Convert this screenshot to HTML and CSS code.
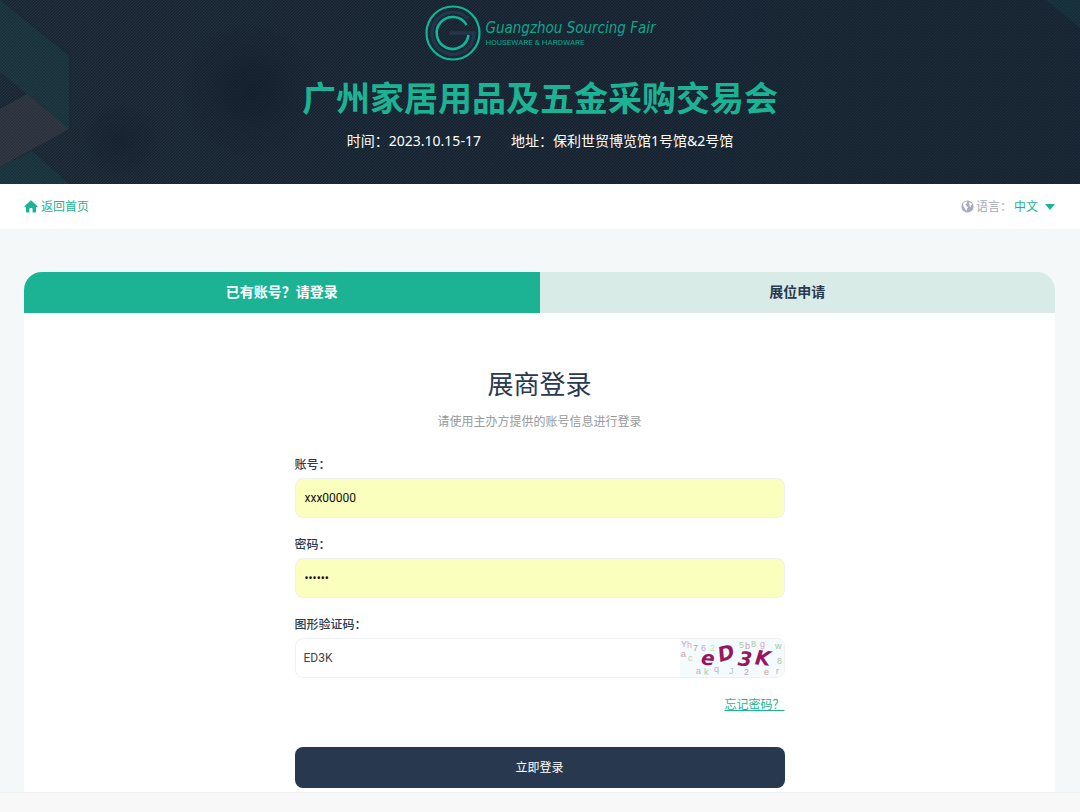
FILE: index.html
```
<!DOCTYPE html>
<html lang="zh-CN">
<head>
    <meta charset="UTF-8">
    <meta name="viewport" content="width=device-width, initial-scale=1.0">
    <title>展商登录</title>
    <link rel="stylesheet" href="styles.css">
</head>
<body>
    <header class="banner">
        <!-- Decorative facets behind the title -->
        <svg class="banner-shapes left" width="70" height="184" viewBox="0 0 70 184" aria-hidden="true">
            <path d="M0 0L69 56V129L27 94L0 72Z" fill="#1cb394" fill-opacity=".08"/>
            <path d="M0 109L27 94L69 129L0 167Z" fill="#b08c7c" fill-opacity=".12"/>
            <path d="M0 167L32 151L69 184H0Z" fill="#1cb394" fill-opacity=".08"/>
        </svg>
        <svg class="banner-shapes right" width="34" height="28" viewBox="0 0 34 28" aria-hidden="true">
            <path d="M0 0H34V28Z" fill="#1cb394" fill-opacity=".08"/>
        </svg>
        <div class="logo">
            <svg width="56" height="56" viewBox="0 0 56 56" fill="none" aria-hidden="true">
                <circle cx="28" cy="28" r="26.5" stroke="#0eb796" stroke-width="2.2"/>
                <path d="M43 13.500A21 21 0 1 0 49 28H24" stroke="#24364c" stroke-width="3.4"/>
                <path d="M41.500 20A16 16 0 1 0 43.500 30" stroke="#0eb796" stroke-width="2.6"/>
            </svg>
            <div class="logo-text">
                <span class="logo-name">Guangzhou Sourcing Fair</span>
                <span class="logo-sub">HOUSEWARE &amp; HARDWARE</span>
            </div>
        </div>
        <h1>广州家居用品及五金采购交易会</h1>
        <p class="info">
            <span>时间：2023.10.15-17</span>
            <span>地址：保利世贸博览馆1号馆&amp;2号馆</span>
        </p>
    </header>

    <nav class="toolbar">
        <a class="home" href="#">
            <svg width="14" height="13" viewBox="0 0 14 13" aria-hidden="true">
                <path d="M7 0.3L13.6 6.3Q13.7 7 13 7H12V11.6Q12 12.6 11 12.6H8.6V9Q8.6 8 7 8T5.400 9V12.6H3Q2 12.6 2 11.6V7H1Q.3 7 .4 6.300Z" fill="#1cb394"/>
            </svg>
            返回首页
        </a>
        <div class="language">
            <svg width="13" height="13" viewBox="0 0 13 13" aria-hidden="true">
                <circle cx="6.5" cy="6.500" r="6.100" fill="#a4adb9"/>
                <path d="M2 3.500L4 1.700L6.500 1.600L5.800 3.400L4.600 4.600L5.600 6L7 7.200L5.800 9.300L5.200 11.300L4 8.700L2.500 6.600ZM8 2.200L10.300 3L11.300 5L9.800 4.900L10 7L8.500 6.200L8.300 4.300Z" fill="#fff"/>
            </svg>
            <span>语言：</span>
            <button type="button" class="lang-btn">中文
                <svg width="10" height="6" viewBox="0 0 10 6" aria-hidden="true"><path d="M0 0H10L5 6Z" fill="#1cb394"/></svg>
            </button>
        </div>
    </nav>

    <main class="content">
        <div class="tabs">
            <a class="tab active" href="#">已有账号？请登录</a>
            <a class="tab" href="#">展位申请</a>
        </div>
        <div class="card">
            <h2>展商登录</h2>
            <p class="hint">请使用主办方提供的账号信息进行登录</p>
            <form class="login-form">
                <div class="field">
                    <label for="account">账号：</label>
                    <input class="filled" type="text" id="account" value="xxx00000">
                </div>
                <div class="field">
                    <label for="password">密码：</label>
                    <input class="filled" type="password" id="password" value="123456">
                </div>
                <div class="field">
                    <label for="captcha">图形验证码：</label>
                    <div class="captcha-row">
                        <input type="text" id="captcha" value="ED3K">
                        <svg class="captcha-img" width="104" height="38" viewBox="0 0 104 38" role="img" aria-label="验证码">
                            <g class="noise">
                                <text x="1" y="8" fill="#b7a3d8">Y</text>
                                <text x="7" y="9" fill="#e0a8a8">h</text>
                                <text x="13" y="12" fill="#a8a8c0">7</text>
                                <text x="1" y="18" fill="#dc9a9a">a</text>
                                <text x="8" y="22" fill="#b9d0a4">c</text>
                                <text x="21" y="12" fill="#c0a6e4">6</text>
                                <text x="30" y="12" fill="#c6dcb0">2</text>
                                <text x="34" y="33" fill="#b9abc8">q</text>
                                <text x="24" y="36" fill="#a9c99c">k</text>
                                <text x="16" y="35" fill="#dca4b8">a</text>
                                <text x="49" y="35" fill="#bcc2cc">J</text>
                                <text x="59" y="9" fill="#b4ce9c">5</text>
                                <text x="65" y="10" fill="#c89cb8">b</text>
                                <text x="71" y="8" fill="#a8c8a0">8</text>
                                <text x="80" y="8" fill="#dba6c2">g</text>
                                <text x="84" y="36" fill="#dc9a9a">e</text>
                                <text x="64" y="36" fill="#b9a0e2">2</text>
                                <text x="95" y="10" fill="#a0c8a0">w</text>
                                <text x="97" y="25" fill="#b0cc98">8</text>
                                <text x="96" y="35" fill="#dfa0a0">r</text>
                            </g>
                            <g class="code">
                                <text x="21" y="26" transform="rotate(6 28 22)">e</text>
                                <text x="38" y="21" transform="rotate(-16 46 15)">D</text>
                                <text x="58" y="27" transform="rotate(6 65 22)">3</text>
                                <text x="75" y="26" transform="rotate(6 82 20)">K</text>
                            </g>
                        </svg>
                    </div>
                </div>
                <a class="forgot" href="#">忘记密码？</a>
                <button type="submit" class="submit">立即登录</button>
            </form>
        </div>
    </main>
    <footer class="footer"></footer>
</body>
</html>
```
FILE: styles.css
```
/* General Styles */
* {
    box-sizing: border-box;
}

body {
    margin: 0;
    min-height: 100vh;
    display: flex;
    flex-direction: column;
    font-family: "Noto Sans", "Noto Sans CJK SC", sans-serif;
    font-size: 12px;
    line-height: 20px;
    color: #283a50;
    background: #f4f8f9;
}

h1, h2, p {
    margin: 0;
}

/* Banner */
.banner {
    position: relative;
    display: flex;
    flex-direction: column;
    align-items: center;
    height: 184px;
    padding-top: 5px;
    background:
        linear-gradient(135deg, rgba(5, 12, 22, 0.35) 25%, transparent 25% 50%, rgba(5, 12, 22, 0.35) 50% 75%, transparent 75%) 0 0 / 3px 3px,
        radial-gradient(circle at 250px 90px, rgba(12, 24, 38, 0.4), transparent 70px),
        radial-gradient(circle at 120px 140px, rgba(12, 24, 38, 0.3), transparent 40px),
        linear-gradient(100deg, #243342, #202e3e 60%, #1e2e3d);
}

.banner-shapes {
    position: absolute;
    top: 0;
}

.banner-shapes.left {
    left: 0;
}

.banner-shapes.right {
    right: 0;
}

.logo {
    display: flex;
    align-items: center;
    gap: 5px;
}

.logo-text {
    display: flex;
    flex-direction: column;
    color: #0da78b;
}

.logo-name {
    font-family: "DejaVu Sans Condensed", "DejaVu Sans", sans-serif;
    font-size: 15px;
    font-style: italic;
    line-height: 20px;
}

.logo-sub {
    font-family: Roboto, sans-serif;
    font-size: 8px;
    line-height: 10px;
}

h1 {
    margin-top: 12px;
    font-size: 34px;
    line-height: 50px;
    font-weight: 700;
    color: #1cb394;
}

.info {
    display: flex;
    gap: 30px;
    margin-top: 8px;
    font-size: 14px;
    color: #fff;
}

/* Toolbar */
.toolbar {
    display: flex;
    justify-content: space-between;
    align-items: center;
    height: 46px;
    padding: 0 25px 0 24px;
    background: #fff;
    border-bottom: 1px solid #f2f5f6;
}

.home {
    display: flex;
    align-items: center;
    gap: 3px;
    color: #1cb394;
    text-decoration: none;
}

.language {
    display: flex;
    align-items: center;
    gap: 2px;
    color: #a4adb9;
}

.lang-btn {
    display: flex;
    align-items: center;
    gap: 7px;
    padding: 0;
    border: 0;
    background: none;
    font: inherit;
    color: #1cb394;
}

/* Tabs and card */
.content {
    flex: 1;
    display: flex;
    flex-direction: column;
    padding: 42px 25px 0 24px;
}

.tabs {
    display: flex;
    overflow: hidden;
    border-radius: 18px 18px 0 0;
}

.tab {
    flex: 1;
    padding: 10px 0 11px;
    background: #d8ebe7;
    color: #283a50;
    font-size: 14px;
    font-weight: 700;
    text-align: center;
    text-decoration: none;
}

.tab.active {
    background: #1cb394;
    color: #fff;
}

.card {
    flex: 1;
    padding-top: 51px;
    background: #fff;
    text-align: center;
}

h2 {
    font-size: 26px;
    line-height: 40px;
    font-weight: 400;
}

.hint {
    margin-top: 8px;
    color: #999;
}

/* Login form */
.login-form {
    display: flex;
    flex-direction: column;
    max-width: 490px;
    margin: 23px auto 4px;
    text-align: left;
}

.field {
    margin-bottom: 17px;
}

.field label {
    display: block;
    margin-bottom: 3px;
    font-weight: 500;
}

.field input {
    display: block;
    width: 100%;
    height: 40px;
    padding: 0 9px;
    border: 1px solid #eef0f2;
    border-radius: 8px;
    background: #fff;
    font-family: Roboto, sans-serif;
    font-size: 12px;
    color: #444;
    outline: none;
}

.field input.filled {
    background: #faffbd;
    color: #111;
}

.captcha-row {
    display: flex;
    height: 40px;
    overflow: hidden;
    border: 1px solid #eef0f2;
    border-radius: 8px;
}

.captcha-row input {
    flex: 1;
    height: 38px;
    padding: 0 8px;
    border: 0;
}

.captcha-img {
    flex: none;
    background: #f3fbfe;
}

.noise {
    font-family: "Liberation Sans", sans-serif;
    font-size: 9px;
}

.code {
    font-family: "DejaVu Sans", sans-serif;
    font-size: 20px;
    font-weight: 700;
    font-style: italic;
    fill: #96175c;
}

.forgot {
    align-self: flex-end;
    color: #1cb394;
    text-decoration: underline;
}

.submit {
    height: 41px;
    margin-top: 32px;
    border: 0;
    border-radius: 8px;
    background: #28394f;
    color: #fff;
    font: inherit;
}

/* Footer */
.footer {
    height: 20px;
    background: #f8f8f8;
    border-top: 1px solid #f1f2f2;
}
```
